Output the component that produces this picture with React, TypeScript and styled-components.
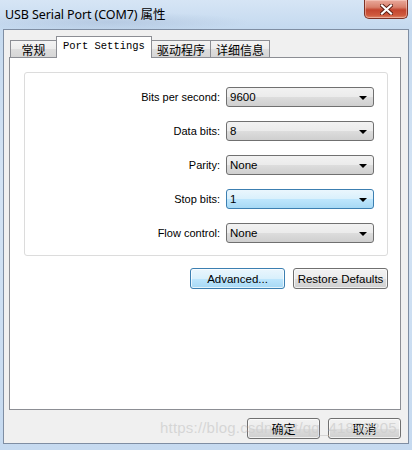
import React, { useState } from 'react';
import styled, { createGlobalStyle, css } from 'styled-components';

const GlobalStyle = createGlobalStyle`
  html, body {
    margin: 0;
    padding: 0;
    background: #c9dcf0;
  }
  * {
    box-sizing: border-box;
  }
`;

const uiFont = `"Liberation Sans", "Noto Sans CJK SC", sans-serif`;
const cjkFont = `"Noto Sans CJK SC", "Liberation Sans", sans-serif`;

const Window = styled.div`
  position: relative;
  width: 412px;
  height: 450px;
  background: linear-gradient(180deg, #c3d8ee 0%, #d3e3f4 40%, #c6daf0 100%);
  display: flex;
  flex-direction: column;
  overflow: hidden;
  font-family: ${uiFont};
  color: #000;
`;

const TitleBar = styled.div`
  height: 29px;
  display: flex;
  align-items: flex-start;
  justify-content: space-between;
  padding-left: 5px;
  padding-right: 4px;
  background:
    radial-gradient(ellipse 140px 10px at 110px 22px, rgba(150, 170, 200, 0.35), transparent),
    linear-gradient(180deg, #d6e5f5 0%, #c4d9ef 100%);
`;

const Title = styled.div`
  margin-top: 7px;
  font-family: "Noto Sans", "Noto Sans CJK SC", sans-serif;
  font-size: 12.5px;
  line-height: 16px;
  color: #000;
  letter-spacing: -0.1px;
`;

const CloseButton = styled.div`
  width: 44px;
  height: 19px;
  display: flex;
  align-items: center;
  justify-content: center;
  border: 1px solid #7c3125;
  border-top: none;
  border-radius: 0 0 5px 5px;
  background: linear-gradient(180deg, #e9a99b 0%, #d8806c 40%, #c3452f 55%, #cf5a3e 85%, #e08a6c 100%);
  box-shadow: inset 0 0 0 1px rgba(255, 220, 210, 0.45);
`;

const Client = styled.div`
  margin: 0 3px 6px 3px;
  flex: 1;
  border: 1px solid #7f8ea3;
  background: #f0f0f0;
  display: flex;
  flex-direction: column;
  padding: 6px 7px 0 5px;
`;

const TabStrip = styled.div`
  display: flex;
  align-items: flex-end;
  padding-left: 1px;
  margin-bottom: -1px;
  position: relative;
  z-index: 1;
`;

const Tab = styled.div<{ $active?: boolean; $cjk?: boolean; $minWidth?: number }>`
  min-width: ${(p) => p.$minWidth ?? 0}px;
  padding: 0 5px;
  display: flex;
  align-items: center;
  justify-content: center;
  border: 1px solid #8c8e94;
  border-bottom: none;
  margin-right: -1px;
  font-family: ${(p) => (p.$cjk ? cjkFont : `"Liberation Mono", monospace`)};
  font-size: ${(p) => (p.$cjk ? '12px' : '10.5px')};
  ${(p) =>
    p.$active
      ? css`
          height: 22px;
          background: #fff;
          padding: 0 6px 4px;
          position: relative;
          z-index: 2;
        `
      : css`
          height: 17px;
          margin-bottom: 1px;
          background: linear-gradient(180deg, #f4f4f4 0%, #ececec 50%, #dedede 51%, #d6d6d6 100%);
          padding-top: 1px;
        `}
`;

const TabPanel = styled.div`
  height: 353px;
  background: #fff;
  border: 1px solid #8c8e94;
  padding: 14px 12px 0 14px;
  display: flex;
  flex-direction: column;
`;

const GroupBox = styled.div`
  border: 1px solid #dcdcdc;
  border-radius: 3px;
  padding: 14px 13px 12px 0;
  display: flex;
  flex-direction: column;
  gap: 14px;
`;

const Row = styled.div`
  display: flex;
  align-items: center;
  justify-content: flex-end;
  gap: 6px;
`;

const Label = styled.label`
  font-size: 11px;
  line-height: 20px;
`;

const Combo = styled.div<{ $hot?: boolean }>`
  width: 148px;
  height: 20px;
  border-radius: 3px;
  display: flex;
  align-items: center;
  justify-content: space-between;
  padding: 0 6px 0 3px;
  font-size: 11.5px;
  border: 1px solid ${(p) => (p.$hot ? '#3c7fb1' : '#707070')};
  background: ${(p) =>
    p.$hot
      ? 'linear-gradient(180deg, #eaf6fd 0%, #d9f0fc 50%, #bee6fd 51%, #a7d9f5 100%)'
      : 'linear-gradient(180deg, #f2f2f2 0%, #ebebeb 50%, #dddddd 51%, #cfcfcf 100%)'};
`;

const Arrow = styled.span`
  width: 0;
  height: 0;
  border-left: 4px solid transparent;
  border-right: 4px solid transparent;
  border-top: 4px solid #000;
  margin-top: 1px;
`;

const ButtonRow = styled.div<{ $gap: number; $top: number }>`
  display: flex;
  justify-content: flex-end;
  gap: ${(p) => p.$gap}px;
  margin-top: ${(p) => p.$top}px;
`;

const Button = styled.button<{ $width: number; $focused?: boolean; $cjk?: boolean }>`
  width: ${(p) => p.$width}px;
  height: 21px;
  border-radius: 3px;
  padding: 0;
  font-family: ${(p) => (p.$cjk ? cjkFont : uiFont)};
  font-size: ${(p) => (p.$cjk ? '12px' : '11.5px')};
  color: #000;
  border: 1px solid ${(p) => (p.$focused ? '#3c7fb1' : '#707070')};
  box-shadow: inset 0 0 0 1px rgba(255, 255, 255, 0.7);
  background: ${(p) =>
    p.$focused
      ? 'linear-gradient(180deg, #eaf6fd 0%, #d9f0fc 50%, #bee6fd 51%, #a7d9f5 100%)'
      : 'linear-gradient(180deg, #f2f2f2 0%, #ebebeb 50%, #dddddd 51%, #cfcfcf 100%)'};
`;

const Watermark = styled.div`
  position: absolute;
  left: 160px;
  top: 419px;
  font-family: "Liberation Sans", sans-serif;
  font-size: 15px;
  letter-spacing: 0.2px;
  color: rgba(205, 205, 205, 0.75);
  pointer-events: none;
  white-space: nowrap;
`;

interface Field {
  label: string;
  value: string;
  hot?: boolean;
}

const App: React.FC = () => {
  const [fields] = useState<Field[]>([
    { label: 'Bits per second:', value: '9600' },
    { label: 'Data bits:', value: '8' },
    { label: 'Parity:', value: 'None' },
    { label: 'Stop bits:', value: '1', hot: true },
    { label: 'Flow control:', value: 'None' },
  ]);

  return (
    <>
      <GlobalStyle />
      <Window>
        <TitleBar>
          <Title>USB Serial Port (COM7) 属性</Title>
          <CloseButton>
            <svg width="13" height="11" viewBox="0 0 13 11">
              <path
                d="M2 1.5 L11 9.5 M11 1.5 L2 9.5"
                stroke="#5a1d12"
                strokeWidth="4"
                strokeLinecap="square"
              />
              <path
                d="M2 1.5 L11 9.5 M11 1.5 L2 9.5"
                stroke="#fff"
                strokeWidth="2.2"
                strokeLinecap="square"
              />
            </svg>
          </CloseButton>
        </TitleBar>
        <Client>
          <TabStrip>
            <Tab $cjk $minWidth={47}>常规</Tab>
            <Tab $active>Port Settings</Tab>
            <Tab $cjk $minWidth={57}>驱动程序</Tab>
            <Tab $cjk $minWidth={57}>详细信息</Tab>
          </TabStrip>
          <TabPanel>
            <GroupBox>
              {fields.map((f) => (
                <Row key={f.label}>
                  <Label>{f.label}</Label>
                  <Combo $hot={f.hot}>
                    <span>{f.value}</span>
                    <Arrow />
                  </Combo>
                </Row>
              ))}
            </GroupBox>
            <ButtonRow $gap={8} $top={12}>
              <Button $width={95} $focused>
                Advanced...
              </Button>
              <Button $width={95}>Restore Defaults</Button>
            </ButtonRow>
          </TabPanel>
          <ButtonRow $gap={8} $top={8}>
            <Button $width={73} $cjk>
              确定
            </Button>
            <Button $width={73} $cjk>
              取消
            </Button>
          </ButtonRow>
        </Client>
        <Watermark>https://blog.csdn.net/qq_41852205</Watermark>
      </Window>
    </>
  );
};

export default App;
